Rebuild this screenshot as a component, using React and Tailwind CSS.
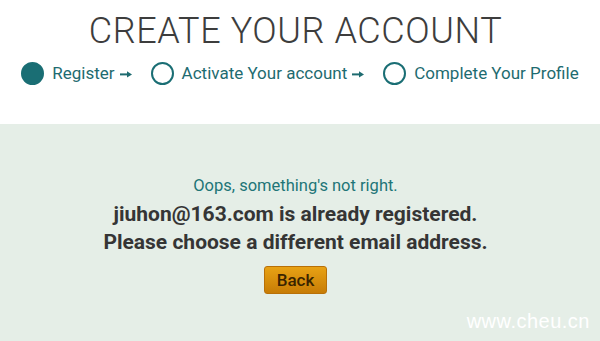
import React from "react";

function Arrow() {
  return (
    <svg width="12" height="9" viewBox="0 0 12 9" className="ml-[5px] mt-[1px]">
      <path d="M0 3.4 H8 V5.4 H0 Z" fill="#1e6b70" />
      <path d="M7 1.2 L12 4.4 L7 7.6 Z" fill="#1e6b70" />
    </svg>
  );
}

function Step({ filled, label, arrow }) {
  return (
    <div className="flex items-center">
      <span
        className={
          "block w-[23px] h-[23px] rounded-full border-2 border-[#1a6e74] " +
          (filled ? "bg-[#1a6e74]" : "bg-transparent")
        }
      />
      <span className="ml-[8px] text-[17px] text-[#1e6b70]">{label}</span>
      {arrow && <Arrow />}
    </div>
  );
}

export default function App() {
  return (
    <div className="w-[600px] h-[341px] bg-white overflow-hidden flex flex-col font-['Roboto',sans-serif] relative">
      <div className="h-[124px] flex flex-col items-center">
        <h1 className="mt-[9px] pr-[9px] text-[36px] font-light tracking-[0.6px] text-[#3d3d3d] leading-[44px]">
          CREATE YOUR ACCOUNT
        </h1>
        <div className="mt-[8px] flex items-center gap-[19px]">
          <Step filled label="Register" arrow />
          <Step label="Activate Your account" arrow />
          <Step label="Complete Your Profile" />
        </div>
      </div>
      <div className="flex-1 bg-[#e5eee7] flex flex-col items-center pr-[9px]">
        <p className="mt-[51px] text-[16.5px] text-[#217577] leading-[22px]">Oops, something's not right.</p>
        <p className="mt-[3px] text-[21px] font-bold text-[#353535] leading-[28px] text-center">
          jiuhon@163.com is already registered.
          <br />
          Please choose a different email address.
        </p>
        <button className="mt-[10px] w-[63px] h-[28px] rounded-[3px] bg-gradient-to-b from-[#e8a214] to-[#c77c06] border border-[#b87008] text-[17px] font-medium text-[#3a2400] leading-none">
          Back
        </button>
      </div>
      <span className="absolute right-[10px] bottom-[5px] font-['Liberation_Sans',sans-serif] text-[20px] text-white tracking-[0.5px]">
        www.cheu.cn
      </span>
    </div>
  );
}
